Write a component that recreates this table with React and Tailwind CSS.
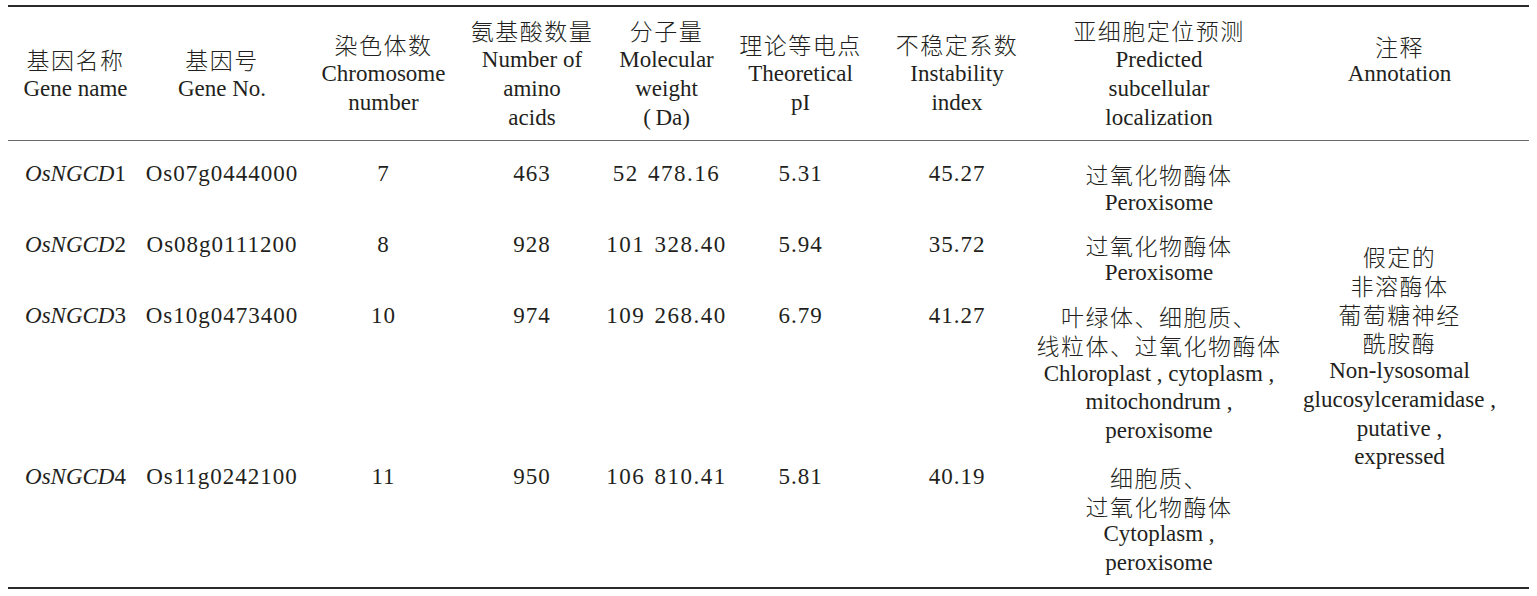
import React from "react";

// 拉丁字母用衬线体, 中文单独指定
const serif = { fontFamily: '"Liberation Serif", "Times New Roman", serif' };
const cjk = { fontFamily: '"Noto Sans CJK SC", "Noto Sans CJK JP", sans-serif' };

// column widths, left to right
const cols = "grid-cols-[135px_158px_165px_132px_137px_131px_182px_222px]";

// 中文行单独成块, 避免行高被撑开
const Zh = ({children}) => <div className="text-[23px] tracking-[1.5px] font-light" style={cjk}>{children}</div>;

const Lines = ({lines, className = ""}) => (
    <div className={`flex flex-col items-center whitespace-nowrap ${className}`}>
        {lines.map((l, i) => <div key={i}>{l}</div>)}
    </div>
);

const header = [
    [<Zh>基因名称</Zh>, "Gene name"],
    [<Zh>基因号</Zh>, "Gene No."],
    [<Zh>染色体数</Zh>, "Chromosome", "number"],
    [<Zh>氨基酸数量</Zh>, "Number of", "amino", "acids"],
    [<Zh>分子量</Zh>, "Molecular", "weight", "(\u2009Da)"],
    [<Zh>理论等电点</Zh>, "Theoretical", "pI"],
    [<Zh>不稳定系数</Zh>, "Instability", "index"],
    [<Zh>亚细胞定位预测</Zh>, "Predicted", "subcellular", "localization"],
];

const peroxisome = [<Zh>过氧化物酶体</Zh>, "Peroxisome"];

const rows = [
    {n: 1, no: "Os07g0444000", chr: "7", aa: "463", mw: "52 478.16", pi: "5.31", ii: "45.27", loc: peroxisome, mt: "mt-[19px]"},
    {n: 2, no: "Os08g0111200", chr: "8", aa: "928", mw: "101 328.40", pi: "5.94", ii: "35.72", loc: peroxisome, mt: "mt-[13px]"},
    {
        n: 3, no: "Os10g0473400", chr: "10", aa: "974", mw: "109 268.40", pi: "6.79", ii: "41.27", mt: "mt-[14px]",
        loc: [
            <Zh>叶绿体、细胞质、</Zh>,
            <Zh>线粒体、过氧化物酶体</Zh>,
            "Chloroplast , cytoplasm ,",
            "mitochondrum ,",
            "peroxisome",
        ],
    },
    {
        n: 4, no: "Os11g0242100", chr: "11", aa: "950", mw: "106 810.41", pi: "5.81", ii: "40.19", mt: "mt-[17px]",
        loc: [<Zh>细胞质、</Zh>, <Zh>过氧化物酶体</Zh>, "Cytoplasm ,", "peroxisome"],
    },
];

const annotation = [
    <Zh>假定的</Zh>,
    <Zh>非溶酶体</Zh>,
    <Zh>葡萄糖神经</Zh>,
    <Zh>酰胺酶</Zh>,
    "Non-lysosomal",
    "glucosylceramidase ,",
    "putative ,",
    "expressed",
];

export default function App() {
    return (
        <div className="w-[1537px] h-[596px] bg-white text-[#231f20] text-[23px] pt-[5px] px-[8px]" style={serif}>
            {/* 表头 */}
            <div className="border-t-2 border-[#2a2a2a] border-b border-b-[#6b6b6b] flex h-[136px]">
                <div className={`grid ${cols} items-center leading-[29px]`}>
                    {header.map((h, i) => <Lines key={i} lines={h}/>)}
                </div>
                <div className="w-[260px] flex items-center justify-center leading-[28px] pb-[28px]">
                    <Lines lines={[<Zh>注释</Zh>, "Annotation"]}/>
                </div>
            </div>

            {/* 表体 */}
            <div className="flex border-b-2 border-[#2a2a2a] h-[448px] leading-[28.75px]">
                <div className="flex flex-col">
                    {rows.map(r => (
                        <div key={r.n} className={`grid ${cols} items-start tracking-[1px] ${r.mt}`}>
                            <Lines lines={[<span className="tracking-normal"><i>OsNGCD</i>{r.n}</span>]}/>
                            <Lines lines={[r.no]}/>
                            <Lines lines={[r.chr]}/>
                            <Lines lines={[r.aa]}/>
                            <Lines lines={[r.mw]} className="tracking-[1.5px] [word-spacing:2px]"/>
                            <Lines lines={[r.pi]}/>
                            <Lines lines={[r.ii]}/>
                            <Lines lines={r.loc} className="tracking-normal"/>
                        </div>
                    ))}
                </div>
                <div className="w-[260px] pt-[101px]">
                    <Lines lines={annotation}/>
                </div>
            </div>
        </div>
    );
}
